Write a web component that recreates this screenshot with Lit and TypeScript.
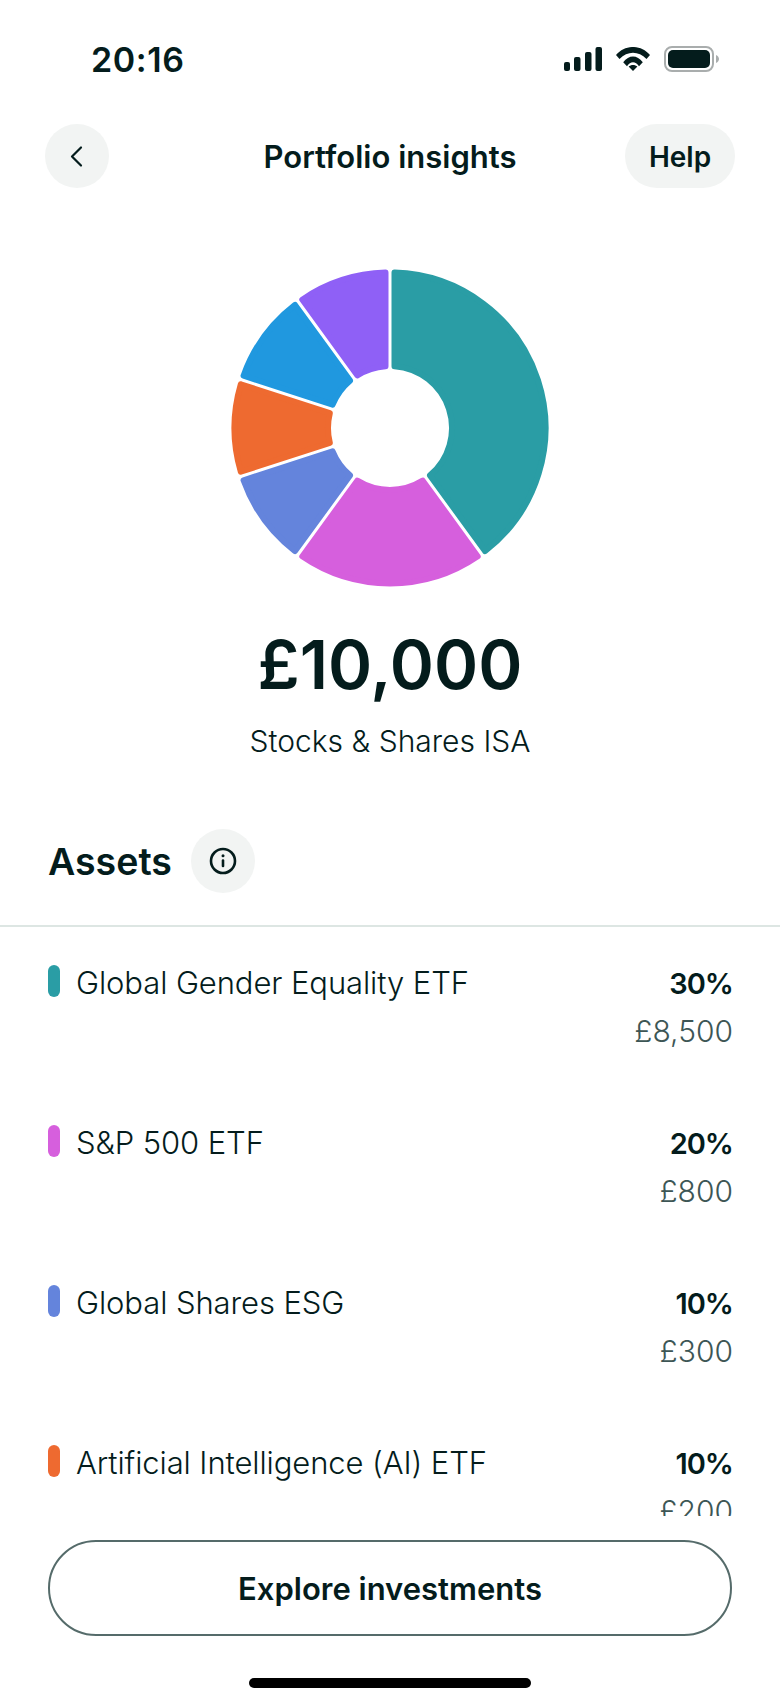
import { LitElement, html, css, svg } from 'lit';
import { customElement } from 'lit/decorators.js';

const slices = [
    { pct: 40, color: '#2a9da5' },
    { pct: 20, color: '#d65fdd' },
    { pct: 10, color: '#6484dc' },
    { pct: 10, color: '#ee6a30' },
    { pct: 10, color: '#2098df' },
    { pct: 10, color: '#8f60f6' },
];

const assets = [
    { name: 'Global Gender Equality ETF', pct: '30%', value: '£8,500', color: '#2a9da5' },
    { name: 'S&P 500 ETF', pct: '20%', value: '£800', color: '#d65fdd' },
    { name: 'Global Shares ESG', pct: '10%', value: '£300', color: '#6484dc' },
    { name: 'Artificial Intelligence (AI) ETF', pct: '10%', value: '£200', color: '#ee6a30' },
];

// polar point, 0deg is 12 o'clock and angles run clockwise
const pt = (r: number, a: number) => `${(160 + r * Math.sin(a)).toFixed(2)} ${(160 - r * Math.cos(a)).toFixed(2)}`;

// slice is inset, then a same colour round stroke gives the rounded corners
function slicePath(start: number, end: number) {
    const corner = 3;
    const inset = 1.5 + corner;
    const R = 158.5 - corner;
    const r = 59 + corner;
    const outer = Math.asin(inset / R);
    const inner = Math.asin(inset / r);
    const large = end - start - 2 * outer > Math.PI ? 1 : 0;
    return `M${pt(R, start + outer)} A${R} ${R} 0 ${large} 1 ${pt(R, end - outer)} L${pt(r, end - inner)} A${r} ${r} 0 ${large} 0 ${pt(r, start + inner)} Z`;
}

function donut() {
    let at = 0;
    const parts = slices.map((s) => {
        const start = at;
        at += (s.pct / 100) * Math.PI * 2;
        return svg`<path d=${slicePath(start, at)} fill=${s.color} stroke=${s.color} stroke-width="6" stroke-linejoin="round"></path>`;
    });
    return html`<svg class="donut" viewBox="0 0 320 320">${parts}</svg>`;
}

@customElement('app-root')
export class AppRoot extends LitElement {
    static styles = css`
        :host {
            display: block;
            width: 780px;
            height: 1704px;
            background: #fff;
            color: #041c1c;
            font-family: Inter, 'Noto Sans', sans-serif;
            overflow: hidden;
        }
        .screen {
            display: flex;
            flex-direction: column;
            height: 1704px;
        }
        .status {
            display: flex;
            justify-content: space-between;
            align-items: center;
            height: 36px;
            margin-top: 41px;
            padding: 0 61px 0 91px;
        }
        .time {
            font-size: 34px;
            font-weight: 600;
            line-height: 36px;
            letter-spacing: 0.6px;
            padding-top: 1px;
        }
        .status-icons {
            display: flex;
            align-items: center;
            gap: 14px;
        }
        .status-icons svg {
            display: block;
        }
        .nav {
            display: grid;
            grid-template-columns: 1fr auto 1fr;
            align-items: center;
            margin-top: 47px;
            padding: 0 45px;
        }
        .round {
            display: flex;
            align-items: center;
            justify-content: center;
            width: 64px;
            height: 64px;
            border-radius: 50%;
            background: #f2f4f3;
        }
        .title {
            font-size: 31px;
            font-weight: 600;
            padding-top: 1px;
        }
        .help {
            justify-self: end;
            width: 110px;
            height: 64px;
            padding-top: 1px;
            box-sizing: border-box;
            border-radius: 32px;
            background: #f2f4f3;
            display: flex;
            align-items: center;
            justify-content: center;
            font-size: 28px;
            font-weight: 600;
        }
        .donut {
            display: block;
            width: 320px;
            height: 320px;
            margin: 80px auto 0;
        }
        .total {
            margin-top: 37px;
            text-align: center;
            font-size: 67px;
            line-height: 80px;
            font-weight: 600;
        }
        .account {
            margin-top: 16px;
            text-align: center;
            font-size: 30px;
            line-height: 40px;
            font-weight: 300;
        }
        .assets-head {
            display: flex;
            align-items: center;
            gap: 19px;
            margin-top: 68px;
            padding: 0 48px 32px;
            border-bottom: 2px solid #dde6e3;
            font-size: 37.5px;
            font-weight: 600;
        }
        .list {
            flex: 1;
            min-height: 0;
            overflow: hidden;
            padding: 34px 47px 0 48px;
        }
        .row {
            display: flex;
            height: 160px;
            box-sizing: border-box;
        }
        .marker {
            width: 12px;
            height: 32px;
            border-radius: 6px;
            margin-top: 4px;
        }
        .name {
            flex: 1;
            margin-left: 16px;
            font-size: 31px;
            line-height: 44px;
            font-weight: 300;
            letter-spacing: -0.1px;
        }
        .nums {
            text-align: right;
            font-size: 30px;
            line-height: 48px;
        }
        .pct {
            font-size: 29px;
            letter-spacing: -1px;
            font-weight: 600;
            line-height: 46px;
        }
        .value {
            font-weight: 300;
            color: #3d5655;
        }
        .cta {
            display: flex;
            align-items: center;
            justify-content: center;
            box-sizing: border-box;
            height: 96px;
            padding-top: 1px;
            margin: 24px 48px 0;
            border: 2px solid #556b6a;
            border-radius: 48px;
            font-size: 31px;
            font-weight: 600;
        }
        .home {
            width: 282px;
            height: 10px;
            border-radius: 5px;
            background: #000;
            margin: 42px auto 16px;
        }
    `;

    render() {
        return html`
            <div class="screen">
                <div class="status">
                    <span class="time">20:16</span>
                    <div class="status-icons">
                        <svg width="38" height="24" viewBox="0 0 38 24" fill="#041c1c">
                            <rect x="0" y="15" width="6" height="9" rx="2"></rect>
                            <rect x="10" y="10" width="6.5" height="14" rx="2"></rect>
                            <rect x="21" y="5" width="6.5" height="19" rx="2"></rect>
                            <rect x="31.5" y="0" width="6.5" height="24" rx="2"></rect>
                        </svg>
                        <svg width="34" height="24" viewBox="0 0 34 24" fill="#041c1c">
                            <path d="M0 8C9 -2.7 25 -2.7 34 8L30.5 12C22.5 3.8 11.5 3.8 3.5 12Z"></path>
                            <path d="M7.2 15.3C13 7.5 21 7.5 26.8 15.3L23 19.3C19.5 14 14.5 14 11 19.3Z"></path>
                            <path d="M17 24L12.6 19.6C15 17.3 19 17.3 21.4 19.6Z"></path>
                        </svg>
                        <svg width="55" height="26" viewBox="0 0 55 26">
                            <rect x="1" y="1" width="48" height="24" rx="7" fill="none" stroke="#a9adad" stroke-width="2"></rect>
                            <rect x="4" y="4" width="42" height="18" rx="5" fill="#041c1c"></rect>
                            <path d="M52 9C54 10 55 11.5 55 13C55 14.5 54 16 52 17Z" fill="#a9adad"></path>
                        </svg>
                    </div>
                </div>
                <div class="nav">
                    <div class="round">
                        <svg width="24" height="24" viewBox="0 0 24 24" fill="none" stroke="#041c1c" stroke-width="2.2" stroke-linecap="round" stroke-linejoin="round">
                            <path d="M16 3.5L7 12.5L16 21.5"></path>
                        </svg>
                    </div>
                    <div class="title">Portfolio insights</div>
                    <div class="help">Help</div>
                </div>
                ${donut()}
                <div class="total">£10,000</div>
                <div class="account">Stocks &amp; Shares ISA</div>
                <div class="assets-head">
                    <span>Assets</span>
                    <div class="round">
                        <svg width="28" height="28" viewBox="0 0 28 28" fill="none" stroke="#041c1c" stroke-width="2.6" stroke-linecap="round">
                            <circle cx="14" cy="14" r="12"></circle>
                            <path d="M14 13.5V19"></path>
                            <circle cx="14" cy="8.8" r="1.5" fill="#041c1c" stroke="none"></circle>
                        </svg>
                    </div>
                </div>
                <div class="list">
                    ${assets.map(
                        (a) => html`
                            <div class="row">
                                <div class="marker" style="background:${a.color}"></div>
                                <div class="name">${a.name}</div>
                                <div class="nums">
                                    <div class="pct">${a.pct}</div>
                                    <div class="value">${a.value}</div>
                                </div>
                            </div>
                        `
                    )}
                </div>
                <div class="cta">Explore investments</div>
                <div class="home"></div>
            </div>
        `;
    }
}
